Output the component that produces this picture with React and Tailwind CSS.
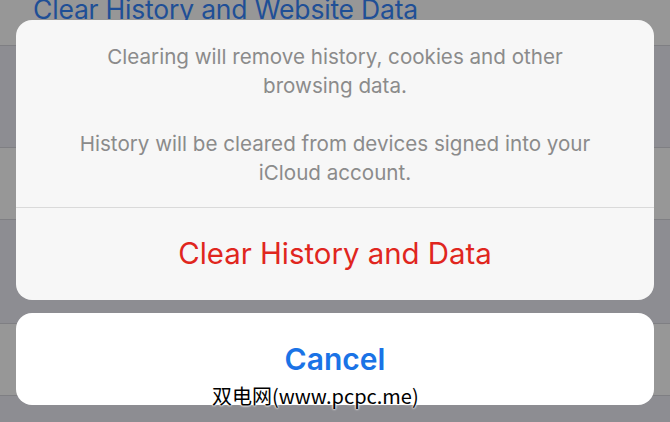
export default function App() {
  const sans = { fontFamily: '"Inter", "Roboto", "Noto Sans", sans-serif' };
  return (
    <div className="relative h-[422px] w-[670px] overflow-hidden bg-[#8d8d92]" style={sans}>
      {/* dimmed settings list behind the sheet */}
      <div className="flex flex-col">
        <div className="h-[45px] overflow-hidden bg-[#979797] pl-[33px]">
          <div className="-mt-[11px] text-[26.5px] leading-[40px] tracking-[-0.2px] text-[#1f4f96]">
            Clear History and Website Data
          </div>
        </div>
        <div className="h-px bg-[#7f7f83]" />
        <div className="h-[101px] bg-[#8d8d92]" />
        <div className="h-px bg-[#7f7f83]" />
        <div className="h-[71px] bg-[#979797]" />
        <div className="h-px bg-[#7f7f83]" />
        <div className="h-[103px] bg-[#8d8d92]" />
        <div className="h-px bg-[#7f7f83]" />
        <div className="h-[71px] bg-[#979797]" />
        <div className="h-px bg-[#7f7f83]" />
        <div className="h-[28px] bg-[#8d8d92]" />
      </div>

      {/* action sheet */}
      <div className="absolute inset-0 flex flex-col gap-[13px] px-[16px] pt-[20px]">
        <div className="flex h-[280px] flex-col overflow-hidden rounded-[16px] bg-[#f7f7f7]">
          <div className="flex h-[187px] flex-col gap-[29px] pt-[22px] text-center text-[20.6px] leading-[29px] text-[#8b8b8b]">
            <p>
              Clearing will remove history, cookies and other
              <br />
              browsing data.
            </p>
            <p>
              History will be cleared from devices signed into your
              <br />
              iCloud account.
            </p>
          </div>
          <div className="h-px bg-[#dadada]" />
          <button type="button" className="flex flex-1 items-center justify-center text-[29.4px] text-[#e0261e]">
            Clear History and Data
          </button>
        </div>
        <button
          type="button"
          className="flex h-[92px] items-center justify-center rounded-[16px] bg-white text-[30px] font-semibold text-[#1a73e6]"
        >
          Cancel
        </button>
      </div>

      {/* watermark */}
      <div
        className="absolute left-[212px] top-[384px] text-[20px] leading-[24px] text-black [text-shadow:0_0_2px_#fff,0_0_2px_#fff,0_0_3px_#fff]"
        style={{ fontFamily: '"Noto Sans CJK SC", "DejaVu Sans", sans-serif' }}
      >
        双电网(www.pcpc.me)
      </div>
    </div>
  );
}
